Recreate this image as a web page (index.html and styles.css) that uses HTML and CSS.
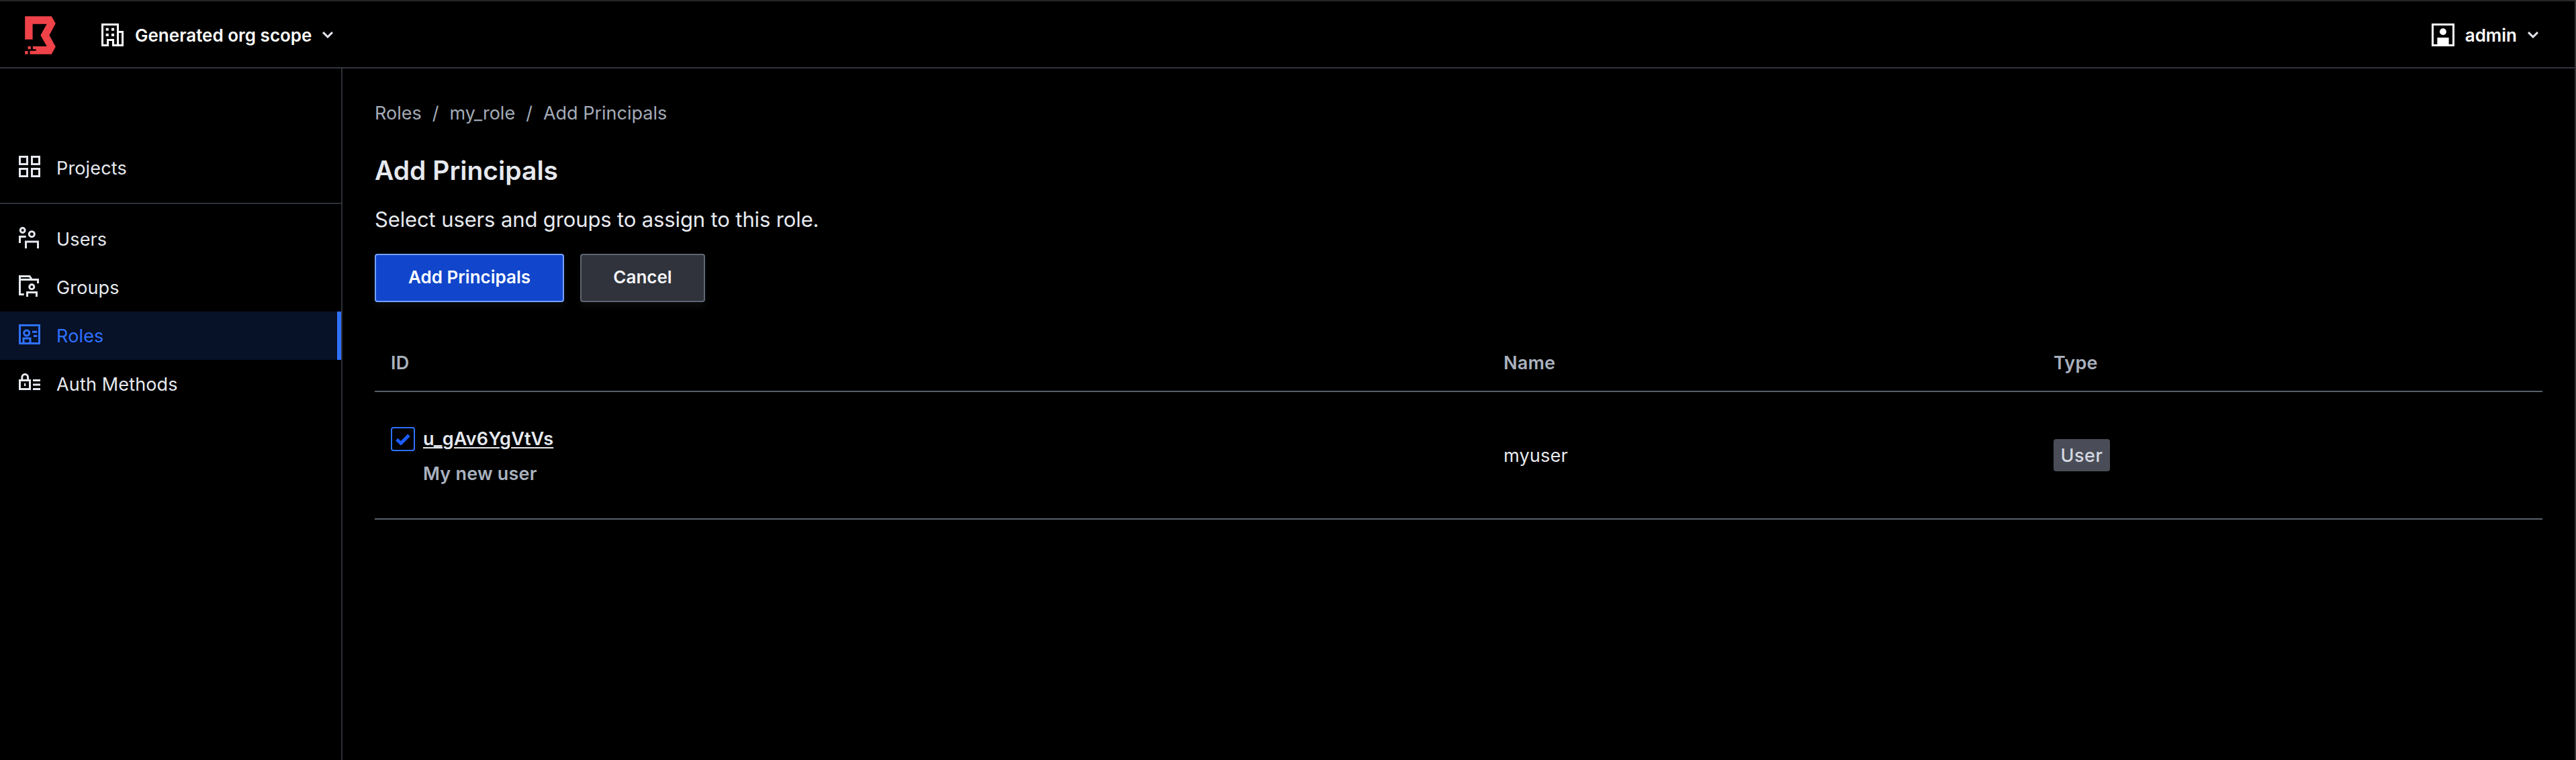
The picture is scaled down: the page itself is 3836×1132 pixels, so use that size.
FILE: index.html
```html
<!DOCTYPE html>
<html lang="en">
<head>
<meta charset="utf-8">
<title>Add Principals</title>
<link rel="stylesheet" href="styles.css">
</head>
<body>
<header class="topbar">
  <svg class="logo" viewBox="113 70 136 170" fill="#ef4349"><path d="M113 71H231L249 103L221 155L249 206L231 239H135V224H162V217H148V204H210L182 155L210 105H147V174H113ZM126 204h13v13h-13ZM113 225h13v14h-13Z"/></svg>
  <button class="menu scope">
    <svg class="menu-icon" viewBox="0 0 34 34" fill="none" stroke="currentColor" stroke-width="3"><path d="M1.5 1.5H24.5V32.5H17.5V24.5H9.5V32.5H1.5ZM24.5 12.5H31.5V32.5H24.5M16 32.5H26"/><path fill="currentColor" stroke="none" d="M6.7 6.7h4v4h-4ZM15 6.7h4v4h-4ZM6.7 15h4v4h-4ZM15 15h4v4h-4Z"/></svg>
    <span class="menu-label">Generated org scope</span>
    <svg class="chevron" viewBox="0 0 16 10" fill="none" stroke="currentColor" stroke-width="3"><path d="M1 1.2L8 8L15 1.2"/></svg>
  </button>
  <button class="menu account">
    <svg class="menu-icon" viewBox="0 0 34 34"><rect x="1.5" y="1.5" width="31" height="31" fill="none" stroke="currentColor" stroke-width="3"/><circle cx="17" cy="12.2" r="5" fill="currentColor"/><path fill="currentColor" d="M8.4 21h17.2v11H8.4Z"/></svg>
    <span class="menu-label">admin</span>
    <svg class="chevron" viewBox="0 0 16 10" fill="none" stroke="currentColor" stroke-width="3"><path d="M1 1.2L8 8L15 1.2"/></svg>
  </button>
</header>
<div class="shell">
  <nav class="sidebar">
    <a class="nav-item"><svg class="nav-icon" viewBox="0 0 32 32"><path d="M1.5 1.5h11v11h-11ZM19.5 1.5h11v11h-11ZM1.5 19.5h11v11h-11ZM19.5 19.5h11v11h-11Z"/></svg><span>Projects</span></a>
    <hr class="nav-divider">
    <a class="nav-item"><svg class="nav-icon" viewBox="0 0 32 32"><circle cx="5.7" cy="5" r="3.4"/><circle cx="19.3" cy="10.7" r="4"/><path d="M1.5 24V14.5H10.7M10.5 32V22H28.5V32"/></svg><span>Users</span></a>
    <a class="nav-item"><svg class="nav-icon" viewBox="0 0 32 32"><path d="M7.7 28.5H1.5V1.5H16L19.5 6.5H28.5V12M1.5 6.5H20M12.5 32V25.5H26.5V32"/><circle cx="19.3" cy="17.3" r="3.5"/></svg><span>Groups</span></a>
    <a class="nav-item active"><svg class="nav-icon" viewBox="0 0 32 32"><path d="M1.5 2.5h29v27h-29ZM7 29V22H17V29M20 12.3H27.3M22 18.5H27.3"/><circle cx="11.7" cy="14" r="4"/></svg><span>Roles</span></a>
    <a class="nav-item"><svg class="nav-icon" viewBox="0 0 32 32"><path d="M1.5 12.5h15v13h-15ZM4.8 12V7.9a4.4 4.4 0 0 1 8.8 0V12M21 12.5H32M21 19H32M21 25.5H32"/><path class="solid" d="M8 17h2.3v4H8Z"/></svg><span>Auth Methods</span></a>
  </nav>
  <main class="content">
    <div class="breadcrumb"><a>Roles</a><span>/</span><a>my_role</a><span>/</span><a>Add Principals</a></div>
    <h1 class="title">Add Principals</h1>
    <p class="intro">Select users and groups to assign to this role.</p>
    <div class="actions">
      <button class="btn primary">Add Principals</button>
      <button class="btn secondary">Cancel</button>
    </div>
    <table class="principals">
      <colgroup><col class="col-id"><col class="col-name"><col class="col-type"></colgroup>
      <thead><tr><th>ID</th><th>Name</th><th>Type</th></tr></thead>
      <tbody><tr>
        <td><div class="principal">
          <span class="checkbox"><svg class="check" viewBox="0 0 22 17"><path d="M1.8 8.5L8 14.3L20 2.2" fill="none" stroke="#1a5cff" stroke-width="5"/></svg></span>
          <div class="principal-text"><a class="principal-id">u_gAv6YgVtVs</a><span class="principal-desc">My new user</span></div>
        </div></td>
        <td>myuser</td>
        <td><span class="badge">User</span></td>
      </tr></tbody>
    </table>
  </main>
</div>
</body>
</html>
```
FILE: styles.css
```css
* { box-sizing: border-box; }
body {
  margin: 0;
  min-height: 1132px;
  display: flex;
  flex-direction: column;
  background: #000;
  color: #e6e9ef;
  font-family: Inter, "Liberation Sans", sans-serif;
  font-size: 27px;
  border-top: 2px solid #262626;
  border-right: 2px solid #333;
}
button { font: inherit; color: inherit; margin: 0; }
svg { display: block; flex: none; }

.topbar {
  height: 100px;
  display: flex;
  align-items: center;
  padding: 2px 54px 0 37px;
  border-bottom: 2px solid #32353d;
}
.logo { width: 46px; height: 57px; }
.menu {
  display: flex;
  align-items: center;
  gap: 16px;
  padding: 0;
  border: 0;
  background: none;
  color: #fff;
  font-size: 26px;
  font-weight: 600;
}
.scope { margin-left: 68px; }
.account { margin-left: auto; }
.menu-icon { width: 34px; height: 34px; }
.chevron { width: 16px; height: 10px; color: #e2e5ec; }

.shell { flex: 1; display: flex; }
.sidebar {
  width: 510px;
  padding-top: 112px;
  border-right: 2px solid #2c3037;
}
.nav-item {
  height: 72px;
  display: flex;
  align-items: center;
  gap: 24px;
  padding-left: 28px;
  letter-spacing: 0.15px;
}
.nav-icon {
  width: 32px;
  height: 32px;
  margin-bottom: 4px;
  fill: none;
  stroke: currentColor;
  stroke-width: 3;
}
.nav-icon .solid { fill: currentColor; stroke: none; }
.nav-item.active {
  color: #2e71ff;
  background: #071127;
  border-right: 6px solid #2e71ff;
}
.nav-divider {
  height: 2px;
  margin: 16px 0;
  border: 0;
  background: #2c3037;
}

.content { flex: 1; padding: 42px 48px 0; }
.breadcrumb {
  height: 48px;
  display: flex;
  align-items: center;
  gap: 16px;
  color: #a3abb8;
}
.title {
  margin: 36px 0 0;
  font-size: 39px;
  line-height: 52px;
  font-weight: 600;
}
.intro {
  margin: 23px 0 0;
  font-size: 31px;
  line-height: 48px;
  letter-spacing: -0.13px;
}
.actions { display: flex; gap: 24px; margin-top: 27px; }
.btn {
  height: 72px;
  border: 2px solid;
  border-radius: 4px;
  padding: 0 0 3px;
  color: #fff;
  font-size: 26px;
  font-weight: 600;
  box-shadow: 0 8px 10px #0a0a0b;
}
.primary { width: 282px; background: #1146cc; border-color: #76a2ff; }
.secondary { width: 186px; background: #30333b; border-color: #5f6673; color: #f4f5f8; }

.principals {
  width: 100%;
  margin-top: 48px;
  table-layout: fixed;
  border-collapse: separate;
  border-spacing: 0;
}
.col-id { width: 1657px; }
.col-name { width: 819px; }
.principals th, .principals td {
  padding: 0 24px;
  text-align: left;
  letter-spacing: 0.2px;
  border-bottom: 2px solid #595f6c;
}
.principals th { height: 86px; color: #a9b1be; font-weight: 600; }
.principals td { height: 190px; }
.principal { display: flex; gap: 12px; padding-top: 4px; }
.checkbox {
  width: 36px;
  height: 36px;
  margin-top: 8px;
  display: flex;
  align-items: center;
  justify-content: center;
  border: 2px solid #2e71ff;
  border-radius: 4px;
}
.check { width: 22px; height: 17px; }
.principal-text { display: flex; flex-direction: column; line-height: 52px; font-weight: 600; }
.principal-id { text-decoration: underline 2px; text-underline-offset: 3px; }
.principal-desc { color: #a9b1be; }
.badge {
  display: inline-flex;
  align-items: center;
  justify-content: center;
  width: 84px;
  height: 48px;
  border-radius: 4px;
  background: #4a4d57;
  color: #d5d9e2;
  font-weight: 500;
  letter-spacing: 0.6px;
  vertical-align: middle;
}
```
